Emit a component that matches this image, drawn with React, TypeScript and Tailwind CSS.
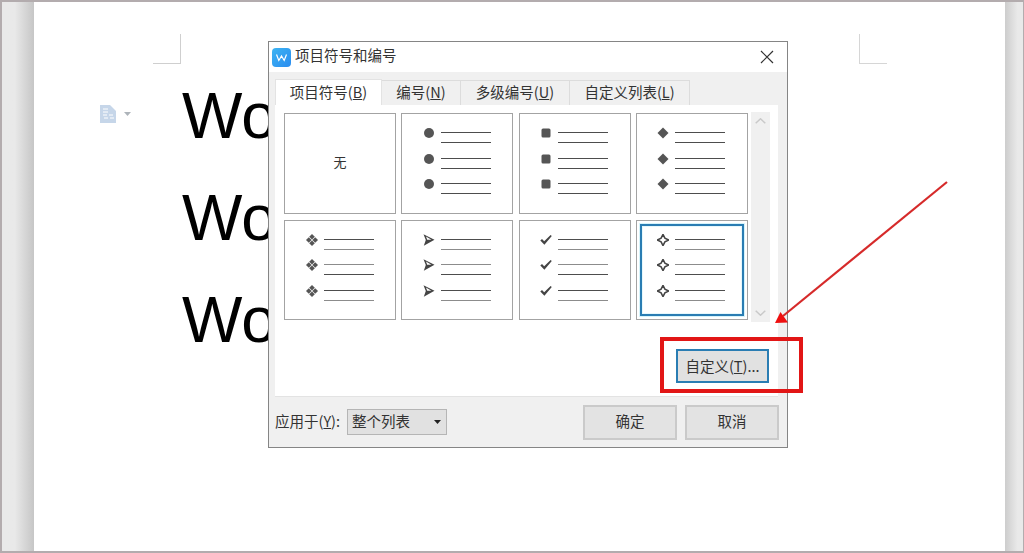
import React from "react";

const FONT = "font-['Noto_Sans_CJK_SC','Liberation_Sans',sans-serif]";

function Mark({ type }: { type: string }) {
  const cls = "w-[12px] h-[12px] block";
  switch (type) {
    case "circle":
      return <svg className={cls} viewBox="0 0 12 12"><circle cx="6" cy="6" r="5" fill="#555" /></svg>;
    case "square":
      return <svg className={cls} viewBox="0 0 12 12"><rect x="1.5" y="1.5" width="9" height="9" rx="1.5" fill="#555" /></svg>;
    case "diamond":
      return <svg className={cls} viewBox="0 0 12 12"><path d="M6 .5 11.5 6 6 11.5.5 6z" fill="#555" /></svg>;
    case "clover":
      return (
        <svg className={cls} viewBox="0 0 12 12" fill="#555">
          <path d="M6 0 8.800 2.800 6 5.600 3.200 2.800z" />
          <path d="M6 6.400 8.800 9.200 6 12 3.200 9.200z" />
          <path d="M0 6 2.800 3.200 5.600 6 2.800 8.800z" />
          <path d="M6.400 6 9.200 3.200 12 6 9.200 8.800z" />
        </svg>
      );
    case "arrow":
      return (
        <svg className={cls} viewBox="0 0 12 12">
          <path d="M.5 .2 11.500 5.800 .8 11.800 2.800 6z" fill="#444" />
          <path d="M3 2.600 8.400 5.800 4.200 5.800z" fill="#fff" />
        </svg>
      );
    case "check":
      return (
        <svg className={cls} viewBox="0 0 12 12">
          <path d="M.3 6.500 2 5l2.200 2.200L10.600 1l1.200.9L4.400 10.800z" fill="#444" />
        </svg>
      );
    default:
      return (
        <svg className={cls} viewBox="0 0 12 12">
          <path d="M6 .3 7.900 4.100 11.700 6 7.900 7.900 6 11.700 4.100 7.900.3 6 4.100 4.100z" fill="none" stroke="#444" strokeWidth="1.5" />
        </svg>
      );
  }
}

function Row({ type, first, second }: { type: string; first: string; second: string }) {
  return (
    <div className="flex h-[11px] items-start">
      <div className="w-[12px] -mt-[5px]">
        <Mark type={type} />
      </div>
      <div className="ml-[6px] flex w-[50px] flex-col gap-[9px]">
        <div className={`h-[1px] ${first}`} />
        <div className={`h-[1px] ${second}`} />
      </div>
    </div>
  );
}

function BulletCell({ type, selected, index }: { type: string; selected?: boolean; index: number }) {
  const dark = "bg-[#4d4d4d]";
  const soft = "bg-[#8c8c8c]";
  return (
    <div className="relative flex h-[100.5px] flex-col items-center gap-[14.5px] border border-[#a3a3a3] bg-white pt-[18px] pr-[1px]">
      <Row type={type} first={dark} second={index > 3 ? soft : dark} />
      <Row type={type} first={index > 3 ? soft : dark} second={dark} />
      <Row type={type} first={dark} second={index > 3 ? soft : dark} />
      {selected && (
        <div className="absolute inset-[3px] border-2 border-[#2a7db3] shadow-[0_0_0_1px_#d6f4fb,inset_0_0_0_1px_#e6f8fc]" />
      )}
    </div>
  );
}

function Tab({ label, hot, active, w }: { label: string; hot: string; active?: boolean; w: string }) {
  return (
    <div
      className={`flex items-center justify-center pb-[2px] text-[14.5px] leading-[20px] text-[#333] ${w} ${
        active
          ? "h-[26px] bg-white border border-b-0 border-[#e3e3e3]"
          : "h-[25px] bg-[#f0f0f0] border border-b-0 border-l-0 border-[#dcdcdc]"
      }`}
    >
      <span>{label}(</span>
      <span className="underline">{hot}</span>
      <span>)</span>
    </div>
  );
}

function WordMark() {
  return <div className="font-['Liberation_Sans',sans-serif] text-[64px] leading-[102px] text-black">Word</div>;
}

export default function App() {
  const cells = ["circle", "square", "diamond", "clover", "arrow", "check", "star"];
  return (
    <div className={`relative flex h-[553px] w-[1024px] overflow-hidden border-2 border-r-[1px] border-[#b3acae] bg-white ${FONT}`}>
      <div className="w-[32px] bg-gradient-to-r from-[#e9e9e9] from-40% to-[#c6c6c6]" />
      <div className="flex-1 bg-white">
        <div className="ml-[119px] mr-[118px] mt-[32px] flex justify-between">
          <div className="h-[30px] w-[28px] border-b border-r border-[#cfcfcf]" />
          <div className="h-[30px] w-[28px] border-b border-l border-[#d6d6d6]" />
        </div>
        <div className="flex items-start pl-[66px]">
          <div className="mt-[41px] flex w-[82px] items-center">
            <svg className="h-[18px] w-[17px]" viewBox="0 0 17 18">
              <path d="M0 0h10l6 6v12H0z" fill="#c6d6e9" />
              <path d="M3 4h5M3 7h5M3 10h4M9 10h4M4 13h4M10 13h4" stroke="#fff" strokeWidth="1" />
            </svg>
            <svg className="ml-[7px] h-[4px] w-[7px]" viewBox="0 0 7 4">
              <path d="M0 0h7L3.5 4z" fill="#aeb4ba" />
            </svg>
          </div>
          <div className="mt-[1px]">
            <WordMark />
            <WordMark />
            <WordMark />
          </div>
        </div>
      </div>
      <div className="w-[18px] bg-gradient-to-r from-[#cdcdcd] to-[#e9e9e9] to-70%" />

      <div className="absolute left-[266px] top-[39px] flex h-[407px] w-[520px] flex-col border border-[#858585] bg-[#f0f0f0]">
        <div className="flex h-[30px] items-center bg-white pl-[3px] pr-[13px]">
          <svg className="h-[19px] w-[19px]" viewBox="0 0 19 19">
            <defs>
              <linearGradient id="wps" x1="0" y1="0" x2="1" y2="1">
                <stop offset="0" stopColor="#3db4f2" />
                <stop offset="1" stopColor="#2a8cf0" />
              </linearGradient>
            </defs>
            <rect width="19" height="19" rx="4" fill="url(#wps)" />
            <path d="M4.5 6.5 6.800 12.500 9.500 8 12.200 12.500 14.500 6.500" fill="none" stroke="#fff" strokeWidth="1.2" />
          </svg>
          <span className="ml-[4px] pb-[4px] text-[14.5px] text-[#333]">项目符号和编号</span>
          <svg className="ml-auto h-[14px] w-[14px]" viewBox="0 0 14 14">
            <path d="M1 1 13 13M13 1 1 13" stroke="#333" strokeWidth="1.2" />
          </svg>
        </div>
        <div className="flex flex-1 flex-col pl-[6px] pr-[9px] pt-[7px]">
          <div className="flex items-end">
            <Tab label="项目符号" hot="B" active w="w-[107px]" />
            <Tab label="编号" hot="N" w="w-[79px]" />
            <Tab label="多级编号" hot="U" w="w-[109px]" />
            <Tab label="自定义列表" hot="L" w="w-[120px]" />
          </div>
          <div className="h-[292px] border-b border-[#e3e3e3] bg-white pl-[9px] pr-[8px] pt-[8px]">
            <div className="flex items-start">
              <div className="grid w-[464px] grid-cols-4 gap-x-[5.33px] gap-y-[6px]">
                <div className="flex h-[100.5px] items-center justify-center border border-[#a3a3a3] bg-white pb-[3px] text-[13px] text-[#333]">
                  无
                </div>
                {cells.map((c, i) => (
                  <BulletCell key={c} type={c} index={i + 1} selected={c === "star"} />
                ))}
              </div>
              <div className="-mt-[1px] ml-[3px] flex h-[210px] w-[19px] flex-col items-center justify-between bg-[#f0f0f0] py-[6px]">
                <svg className="h-[6px] w-[11px]" viewBox="0 0 11 6">
                  <path d="M.7 5.300 5.500.8l4.800 4.500" fill="none" stroke="#c9c9c9" strokeWidth="1.5" />
                </svg>
                <svg className="h-[6px] w-[11px]" viewBox="0 0 11 6">
                  <path d="M.7.7 5.500 5.200 10.300.7" fill="none" stroke="#c9c9c9" strokeWidth="1.5" />
                </svg>
              </div>
            </div>
            <div className="mt-[27px] flex justify-end pr-[1px]">
              <div className="flex h-[34px] w-[93px] items-center justify-center border-2 border-[#2a7db3] bg-[#e1e1e1] pb-[1px] text-[14.5px] text-[#333]">
                <span>自定义(</span>
                <span className="underline">T</span>
                <span>)...</span>
              </div>
            </div>
          </div>
          <div className="mr-[-1px] flex flex-1 items-center">
            <span className="w-[72px] whitespace-nowrap pb-[2px] text-[14.5px] text-[#333]">
              应用于(<span className="underline">Y</span>):
            </span>
            <div className="flex h-[26px] w-[100px] items-center border border-[#b5b5b5] bg-[#e1e1e1] pl-[4px] pr-[5px] text-[14.5px] text-[#333]">
              <span className="pb-[2px]">整个列表</span>
              <svg className="ml-auto h-[4px] w-[7px]" viewBox="0 0 7 4">
                <path d="M0 0h7L3.5 4z" fill="#222" />
              </svg>
            </div>
            <div className="ml-auto flex h-[35px] w-[94px] items-center justify-center border-2 border-[#cacaca] bg-[#e3e3e3] pb-[2px] text-[14.5px] text-[#333]">
              确定
            </div>
            <div className="ml-[8px] flex h-[35px] w-[94px] items-center justify-center border-2 border-[#cacaca] bg-[#e3e3e3] pb-[2px] text-[14.5px] text-[#333]">
              取消
            </div>
          </div>
        </div>
      </div>

      <div className="absolute left-[658px] top-[335px] h-[56px] w-[143px] border-[4px] border-[#e21616]" />
      <svg className="absolute left-[-2px] top-[-2px] h-[553px] w-[1024px]" viewBox="0 0 1024 553">
        <path d="M947 182 783 316" stroke="#d62a2a" strokeWidth="2.2" fill="none" />
        <path d="M775 323 780.500 312 788 322.500z" fill="#ee0f0f" />
      </svg>
    </div>
  );
}
